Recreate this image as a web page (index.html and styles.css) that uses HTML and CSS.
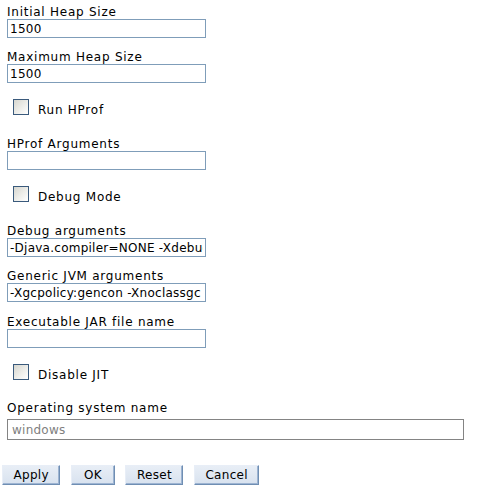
FILE: index.html
```html
<!DOCTYPE html>
<html>
<head>
<meta charset="utf-8">
<link rel="stylesheet" href="styles.css">
</head>
<body>
<form class="form">
  <div class="field f-first">
    <label class="lbl">Initial Heap Size</label>
    <input class="txt" type="text" value="1500">
  </div>
  <div class="field">
    <label class="lbl">Maximum Heap Size</label>
    <input class="txt" type="text" value="1500">
  </div>
  <div class="check">
    <input class="cb" type="checkbox">
    <span class="cblbl">Run HProf</span>
  </div>
  <div class="field f-after-check">
    <label class="lbl">HProf Arguments</label>
    <input class="txt" type="text" value="">
  </div>
  <div class="check">
    <input class="cb" type="checkbox">
    <span class="cblbl">Debug Mode</span>
  </div>
  <div class="field f-after-check">
    <label class="lbl">Debug arguments</label>
    <input class="txt" type="text" value="-Djava.compiler=NONE -Xdebug -Xnoagent -Xrunjdwp:transport=dt_socket,server=y,suspend=n,address=7777">
  </div>
  <div class="field">
    <label class="lbl">Generic JVM arguments</label>
    <input class="txt" type="text" value="-Xgcpolicy:gencon -Xnoclassgc">
  </div>
  <div class="field f-wide-gap">
    <label class="lbl">Executable JAR file name</label>
    <input class="txt" type="text" value="">
  </div>
  <div class="check">
    <input class="cb" type="checkbox">
    <span class="cblbl">Disable JIT</span>
  </div>
  <div class="field f-os">
    <label class="lbl">Operating system name</label>
    <input class="txt txt-ro" type="text" value="windows" readonly>
  </div>
  <div class="buttons">
    <button class="btn" type="button">Apply</button>
    <button class="btn" type="button">OK</button>
    <button class="btn" type="button">Reset</button>
    <button class="btn" type="button">Cancel</button>
  </div>
</form>
</body>
</html>
```

FILE: styles.css
```css
html, body {
  margin: 0;
  padding: 0;
  background: #ffffff;
}
body {
  font-family: "DejaVu Sans", Verdana, sans-serif;
  font-size: 12px;
  letter-spacing: 0.75px;
  color: #000000;
}
.form {
  padding: 6px 0 0 7px;
  display: flex;
  flex-direction: column;
  align-items: flex-start;
}
.field {
  display: flex;
  flex-direction: column;
  align-items: flex-start;
  margin-top: 13px;
}
.f-first { margin-top: 0; }
.f-after-check { margin-top: 23px; }
.f-wide-gap { margin-top: 14px; }
.lbl {
  display: block;
  line-height: 13px;
  height: 13px;
  white-space: nowrap;
}
.txt {
  box-sizing: border-box;
  width: 199px;
  height: 19px;
  margin: 0;
  padding: 0 2px;
  border: 1px solid #7f9db9;
  font-family: "DejaVu Sans", Verdana, sans-serif;
  font-size: 12px;
  letter-spacing: 0.25px;
  color: #000000;
  background: #ffffff;
  outline: none;
}
.f-os { margin-top: 22px; }
.f-os .lbl { margin-bottom: 4px; }
.txt-ro {
  width: 457px;
  height: 21px;
  padding: 0 4px;
  border: 1px solid #848484;
  color: #808080;
}
.check {
  display: flex;
  align-items: flex-start;
  margin-top: 16px;
  padding-left: 6px;
  height: 16px;
}
.cb {
  -webkit-appearance: none;
  appearance: none;
  box-sizing: border-box;
  width: 16px;
  height: 16px;
  margin: 0 9px 0 0;
  border: 1px solid #3a5a7c;
  background: linear-gradient(135deg, #d6d6cf 0%, #eeeeea 55%, #ffffff 100%);
}
.cblbl {
  line-height: 13px;
  margin-top: 5px;
  white-space: nowrap;
}
.buttons {
  display: flex;
  gap: 10.5px;
  margin: 25px 0 0 -5px;
}
.btn {
  box-sizing: border-box;
  height: 20px;
  min-width: 44px;
  margin: 0;
  padding: 0 10.5px;
  font-family: "DejaVu Sans", Verdana, sans-serif;
  font-size: 12px;
  letter-spacing: 0.3px;
  color: #000000;
  background: linear-gradient(#e8eef6, #d8e2ef);
  border: 1px solid;
  border-color: #e8eef7 #6f8eb3 #6f8eb3 #e8eef7;
  box-shadow: inset -1px -1px 0 #9db4d2;
}
```
